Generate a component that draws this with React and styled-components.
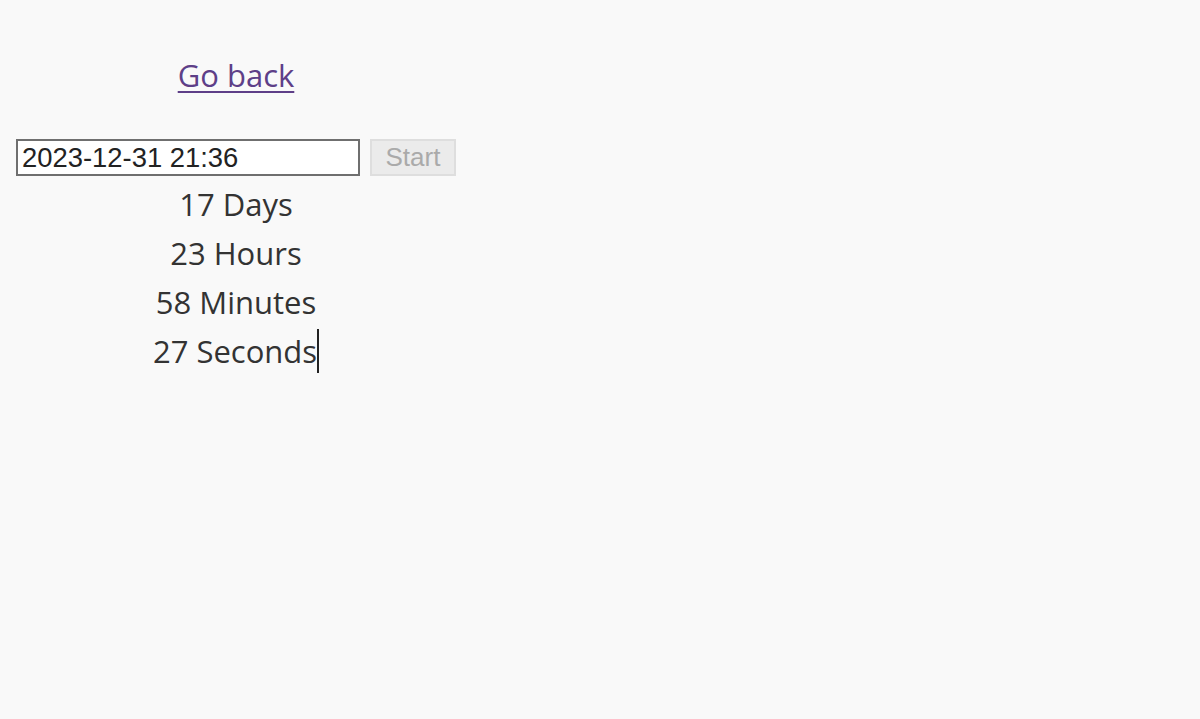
import React from "react";
import styled, { createGlobalStyle } from "styled-components";

const Global = createGlobalStyle`
  html, body { margin: 0; padding: 0; background: #f9f9f9; }
  body { font-family: "Open Sans", "Noto Sans", sans-serif; color: #333; }
`;

const Page = styled.div`
  width: 472px;
  display: flex;
  flex-direction: column;
  align-items: center;
  padding-top: 51px;
`;

const BackLink = styled.a`
  font-size: 31px;
  line-height: 49px;
  color: #5e3f88;
  text-decoration: underline;
  text-underline-offset: 4px;
  text-decoration-thickness: 2px;
`;

const Form = styled.div`
  display: flex;
  align-items: center;
  gap: 10px;
  margin-top: 39px;
`;

const DateInput = styled.input`
  box-sizing: border-box;
  width: 344px;
  height: 37px;
  border: 2px solid #6f6f6f;
  background: #fff;
  font-family: "Liberation Sans", Arial, sans-serif;
  font-size: 27.4px;
  color: #222;
  padding: 0 4px;
  outline: none;
`;

const StartButton = styled.button`
  box-sizing: border-box;
  width: 86px;
  height: 37px;
  border: 2px solid #dedede;
  background: #ebebeb;
  color: #aaaaaa;
  font-family: "Liberation Sans", Arial, sans-serif;
  font-size: 26px;
  padding: 0;
`;

const Units = styled.div`
  margin-top: 4px;
  display: flex;
  flex-direction: column;
  align-items: center;
`;

const Unit = styled.div`
  font-size: 31px;
  line-height: 49px;
  color: #333;
  white-space: nowrap;
`;

const Caret = styled.span`
  display: inline-block;
  width: 2px;
  height: 44px;
  background: #222;
  vertical-align: -10px;
`;

export default function App() {
  return (
    <>
      <Global />
      <Page>
        <BackLink href="#">Go back</BackLink>
        <Form>
          <DateInput defaultValue="2023-12-31 21:36" />
          <StartButton disabled>Start</StartButton>
        </Form>
        <Units>
          <Unit>17 Days</Unit>
          <Unit>23 Hours</Unit>
          <Unit>58 Minutes</Unit>
          <Unit>
            27 Seconds<Caret />
          </Unit>
        </Units>
      </Page>
    </>
  );
}
